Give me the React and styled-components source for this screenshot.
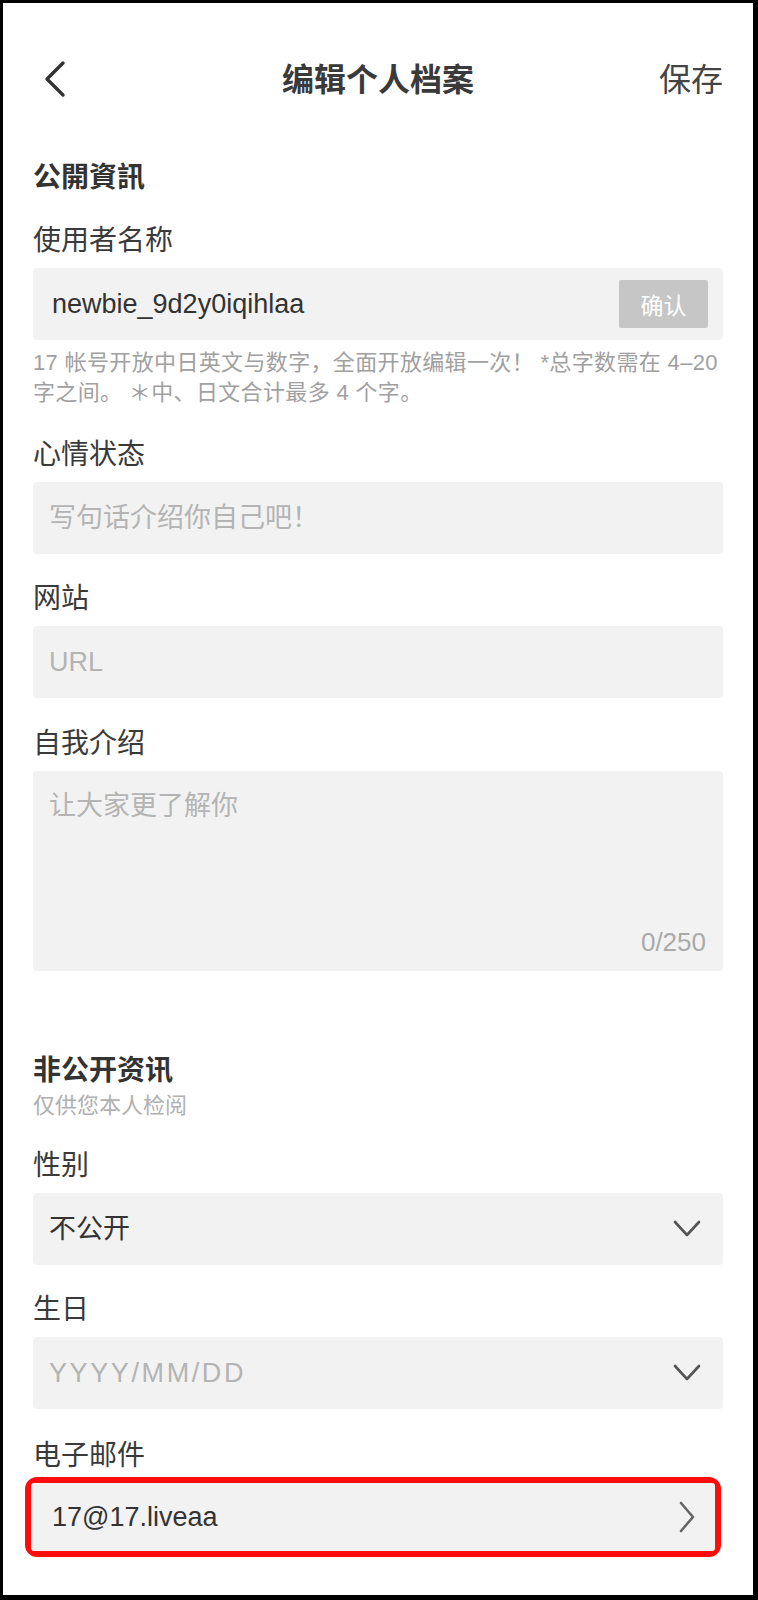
import React from 'react';
import styled, { createGlobalStyle } from 'styled-components';

const GlobalStyle = createGlobalStyle`
  html, body {
    margin: 0;
    padding: 0;
    background: #ffffff;
  }
  body {
    font-family: "Liberation Sans", "Noto Sans CJK SC", sans-serif;
  }
`;

const ChevronLeft = () => (
  <svg width="40" height="40" viewBox="0 0 40 40" fill="none">
    <path d="M30 4 L14 20 L30 36" stroke="#333" strokeWidth="3.4" strokeLinecap="round" strokeLinejoin="round" />
  </svg>
);

const ChevronDown = () => (
  <svg width="28" height="18" viewBox="0 0 28 18" fill="none">
    <path d="M2 2 L14 15 L26 2" stroke="#555" strokeWidth="2.6" strokeLinecap="round" strokeLinejoin="round" />
  </svg>
);

const ChevronRight = () => (
  <svg width="18" height="32" viewBox="0 0 18 32" fill="none">
    <path d="M3 2 L15 16 L3 30" stroke="#666" strokeWidth="2.6" strokeLinecap="round" strokeLinejoin="round" />
  </svg>
);

const Field = ({ label, gap, children }) => (
  <FieldWrap $gap={gap}>
    <Label>{label}</Label>
    {children}
  </FieldWrap>
);

const App = () => {
  return (
    <>
      <GlobalStyle />
      <Frame>
        <Header>
          <BackButton type="button"><ChevronLeft /></BackButton>
          <Title>编辑个人档案</Title>
          <SaveButton type="button">保存</SaveButton>
        </Header>

        <SectionTitle $gap={46}>公開資訊</SectionTitle>

        <Field label="使用者名称" gap={23}>
          <InputRow $leading={19}>
            <Value>newbie_9d2y0iqihlaa</Value>
            <ConfirmButton type="button">确认</ConfirmButton>
          </InputRow>
          <Hint>
            17 帐号开放中日英文与数字，全面开放编辑一次！ *总字数需在 4–20
            <br />
            字之间。 ＊中、日文合计最多 4 个字。
          </Hint>
        </Field>

        <Field label="心情状态" gap={27}>
          <InputRow>
            <Value $placeholder>写句话介绍你自己吧！</Value>
          </InputRow>
        </Field>

        <Field label="网站">
          <InputRow>
            <Value $placeholder>URL</Value>
          </InputRow>
        </Field>

        <Field label="自我介绍" gap={26}>
          <TextArea>
            <Value $placeholder>让大家更了解你</Value>
            <Counter>0/250</Counter>
          </TextArea>
        </Field>

        <SectionTitle $gap={80}>非公开资讯</SectionTitle>
        <SubTitle>仅供您本人检阅</SubTitle>

        <Field label="性别">
          <InputRow $trailing={22}>
            <Value>不公开</Value>
            <ChevronDown />
          </InputRow>
        </Field>

        <Field label="生日">
          <InputRow $trailing={22}>
            <Value $placeholder $tracking={2.6}>YYYY/MM/DD</Value>
            <ChevronDown />
          </InputRow>
        </Field>

        <Field label="电子邮件" gap={27}>
          <Highlight>
            <EmailRow>
              <Value>17@17.liveaa</Value>
              <ChevronRight />
            </EmailRow>
          </Highlight>
        </Field>
      </Frame>
    </>
  );
};

export default App;

const Frame = styled.div`
  box-sizing: border-box;
  width: 758px;
  height: 1600px;
  overflow: hidden;
  border-style: solid;
  border-color: #000000;
  border-width: 3px 5px 5px 3px;
  background: #ffffff;
  padding: 0 30px;
  color: #333333;
`;

const Header = styled.header`
  display: grid;
  grid-template-columns: 1fr auto 1fr;
  align-items: center;
  height: 64px;
  margin-top: 45px;
`;

const BackButton = styled.button`
  justify-self: start;
  display: flex;
  padding: 0;
  margin: -3px 0 0;
  border: none;
  background: none;
`;

const Title = styled.h1`
  margin: 0;
  font-size: 32px;
  font-weight: 700;
  color: #3a3a3a;
  line-height: 40px;
`;

const SaveButton = styled.button`
  justify-self: end;
  padding: 0;
  border: none;
  background: none;
  font-family: inherit;
  font-size: 32px;
  color: #444444;
  line-height: 40px;
`;

const SectionTitle = styled.h2`
  margin: ${(p) => p.$gap}px 0 0;
  font-size: 28px;
  font-weight: 700;
  line-height: 40px;
  color: #333333;
`;

const SubTitle = styled.div`
  font-size: 22px;
  line-height: 30px;
  color: #b0b0b0;
`;

const FieldWrap = styled.div`
  margin-top: ${(p) => p.$gap ?? 25}px;
`;

const Label = styled.div`
  font-size: 28px;
  line-height: 40px;
  color: #3a3a3a;
  margin-bottom: 7px;
`;

const InputRow = styled.div`
  box-sizing: border-box;
  display: flex;
  align-items: center;
  justify-content: space-between;
  height: 72px;
  padding: 0 ${(p) => p.$trailing ?? 15}px 0 ${(p) => p.$leading ?? 16}px;
  background: #f2f2f2;
  border-radius: 4px;
`;

const Value = styled.span`
  font-size: 27px;
  line-height: 36px;
  letter-spacing: ${(p) => p.$tracking ?? 0}px;
  color: ${(p) => (p.$placeholder ? '#b4b4b4' : '#333333')};
`;

const ConfirmButton = styled.button`
  width: 89px;
  height: 48px;
  border: none;
  border-radius: 2px;
  background: #c6c6c6;
  color: #ffffff;
  font-family: inherit;
  font-size: 23px;
  padding: 0;
`;

const Hint = styled.p`
  margin: 8px 0 0;
  font-size: 22px;
  line-height: 30px;
  letter-spacing: 0.35px;
  white-space: nowrap;
  color: #a0a0a0;
`;

const TextArea = styled.div`
  box-sizing: border-box;
  display: flex;
  flex-direction: column;
  justify-content: space-between;
  height: 200px;
  padding: 17px 17px 14px 16px;
  background: #f2f2f2;
  border-radius: 4px;
`;

const Counter = styled.span`
  align-self: flex-end;
  font-size: 26px;
  line-height: 30px;
  color: #aaaaaa;
`;

const Highlight = styled.div`
  margin: -6px 2px 0 -8px;
  border: 6px solid #ff0d0d;
  border-radius: 12px;
`;

const EmailRow = styled.div`
  box-sizing: border-box;
  display: flex;
  align-items: center;
  justify-content: space-between;
  height: 68px;
  padding: 0 19px 0 21px;
  background: #f2f2f2;
  border-radius: 3px;
`;
